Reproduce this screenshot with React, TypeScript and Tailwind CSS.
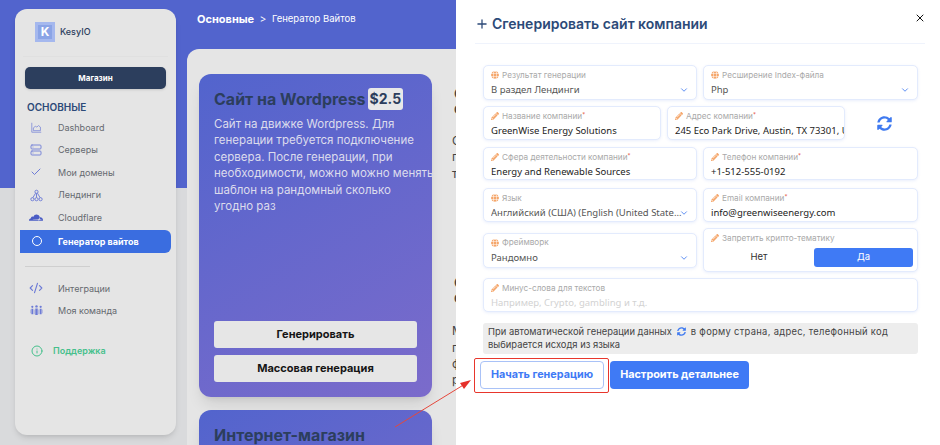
import { ChevronDown, Check, CodeXml, Info, Plus, Server, X } from "lucide-react";
import type { ReactNode } from "react";
import { FaCloudflare, FaGlobe, FaPencilAlt, FaSyncAlt } from "react-icons/fa";

const head = "font-['Inter','Noto_Sans',sans-serif]";
const body = "font-['Noto_Sans','Open_Sans',sans-serif]";

const wordpressLines = [
  "Сайт на движке Wordpress. Для",
  "генерации требуется подключение",
  "сервера. После генерации, при",
  "необходимости, можно можно менять",
  "шаблон на рандомный сколько",
  "угодно раз",
];

function DashIcon() {
  return (
    <svg viewBox="0 0 14 14" className="h-[11px] w-[11px] text-[#7b87d8]" fill="none" stroke="currentColor" strokeWidth="1">
      <path d="M1 1v12h12" />
      <path d="M3 11V7.5l2.5-2 2 1 2-2 2.5 2V11z" />
    </svg>
  );
}

function SitemapIcon() {
  return (
    <svg viewBox="0 0 14 14" className="h-[13px] w-[13px] text-[#6d7bd6]" fill="none" stroke="currentColor" strokeWidth="1">
      <circle cx="7" cy="3" r="1.7" />
      <circle cx="2.6" cy="11" r="1.7" />
      <circle cx="7" cy="11" r="1.7" />
      <circle cx="11.4" cy="11" r="1.7" />
      <path d="M7 4.7v4.6M6 4.5 3 9.5M8 4.5l3 5" />
    </svg>
  );
}

function TeamIcon() {
  return (
    <svg viewBox="0 0 14 14" className="h-[13px] w-[13px] text-[#6d7bd6]" fill="currentColor">
      <circle cx="2.5" cy="3" r="1.2" />
      <circle cx="7" cy="2.6" r="1.3" />
      <circle cx="11.5" cy="3" r="1.2" />
      <path d="M1.5 5h2v6h-2zM5.7 4.8h2.6v7h-2.6zM10.5 5h2v6h-2z" />
      <path d="M.3 6v4M13.7 6v4M4.6 6v5M9.4 6v5" stroke="currentColor" strokeWidth=".5" />
    </svg>
  );
}

function NavItem({ icon, label }: { icon: ReactNode; label: string }) {
  return (
    <div className="flex h-[22.6px] items-center">
      <div className="flex w-[43px] justify-center pr-[3px] pl-[2px]">{icon}</div>
      <span className={`${head} text-[9px] text-[#666a70]`}>{label}</span>
    </div>
  );
}

function Sidebar() {
  return (
    <aside className="mt-[9px] ml-[15px] flex h-[426px] w-[161px] shrink-0 flex-col rounded-xl bg-[#e5e5e5] shadow-md">
      <div className="mx-[8px] flex h-[48px] items-center gap-[5px] border-b border-[#e0e0e0] pb-[2px] pl-[12px]">
        <div className="flex h-[20px] w-[20px] items-center justify-center border-[3px] border-[#a5b8ee] bg-[#8ba4e6]">
          <span className={`${head} text-[12px] leading-none font-bold text-white`}>K</span>
        </div>
        <span className={`${head} text-[9px] font-medium text-[#2c3e5d]`}>KesyIO</span>
      </div>
      <div className={`${head} mx-[10px] mt-[10px] flex h-[22px] items-center justify-center rounded-[5px] bg-[#2c3e5d] text-[8px] font-bold text-white shadow`}>
        Магазин
      </div>
      <div className={`${head} mt-[11px] ml-[12px] text-[10px] leading-[14px] font-semibold text-[#2c4a78]`}>ОСНОВНЫЕ</div>
      <div className="mt-[2px] flex flex-col">
        <NavItem icon={<DashIcon />} label="Dashboard" />
        <NavItem icon={<Server size={12} className="text-[#7b87d8]" />} label="Серверы" />
        <NavItem icon={<Check size={12} className="text-[#6d7bd6]" />} label="Мои домены" />
        <NavItem icon={<SitemapIcon />} label="Лендинги" />
        <NavItem icon={<FaCloudflare size={14} className="text-[#4a5cc5]" />} label="Cloudflare" />
      </div>
      <div className="mt-[1px] mr-[5px] ml-[5px] flex h-[23px] items-center rounded-r-md bg-[#3a6de0]">
        <div className="flex w-[38px] justify-center pr-[5px]">
          <div className="h-[10px] w-[10px] rounded-full border-[1.5px] border-white" />
        </div>
        <span className={`${head} text-[9px] font-bold text-white`}>Генератор вайтов</span>
      </div>
      <div className="mt-[13px] ml-[10px] h-px w-[65px] bg-[#cfcfcf]" />
      <div className="mt-[10px] flex flex-col">
        <NavItem icon={<CodeXml size={14} className="text-[#6d7bd6]" />} label="Интеграции" />
        <NavItem icon={<TeamIcon />} label="Моя команда" />
      </div>
      <div className="mt-[22px] ml-[16px] flex items-center gap-[10px]">
        <Info size={12} className="text-[#45c08c]" />
        <span className={`${head} text-[9px] font-semibold text-[#45c08c]`}>Поддержка</span>
      </div>
    </aside>
  );
}

function Tariff({ title, price, lines, tall }: { title: string; price?: string; lines?: string[]; tall?: boolean }) {
  return (
    <div className={`${tall ? "h-[323px]" : "h-[200px]"} flex shrink-0 flex-col rounded-xl bg-[linear-gradient(150deg,#5264cd,#7b6bcb)] px-[15px] shadow-lg`}>
      <div className={`${head} mt-[14px] flex h-[22px] items-center gap-[2px] text-[16px] font-bold whitespace-nowrap text-[#2c3e5d]`}>
        {title}
        {price && <span className="rounded-[3px] bg-[#e8e8e8] px-[2px] py-px text-[14px] leading-[20px]">{price}</span>}
      </div>
      {lines && (
        <div className={`${head} mt-[6px] text-[11.5px] leading-[16.4px] whitespace-nowrap text-[#dcdcec]`}>
          {lines.map((line) => (
            <div key={line}>{line}</div>
          ))}
        </div>
      )}
      {tall && (
        <div className="mt-auto mb-[15px] flex flex-col gap-[7px]">
          <div className={`${head} flex h-[27px] items-center justify-center rounded-[3px] bg-[#e6e6e6] text-[11px] font-bold text-[#151515]`}>Генерировать</div>
          <div className={`${head} flex h-[27px] items-center justify-center rounded-[3px] bg-[#e6e6e6] text-[11px] font-bold text-[#151515]`}>Массовая генерация</div>
        </div>
      )}
    </div>
  );
}

function MainArea() {
  return (
    <div className="ml-[11px] flex w-[269px] shrink-0 flex-col">
      <div className="flex h-[49px] shrink-0 items-center gap-[6px] pb-[10px] pl-[10px] text-white">
        <span className={`${head} text-[11px] font-bold`}>Основные</span>
        <span className="text-[10px]">&gt;</span>
        <span className={`${head} text-[9.5px]`}>Генератор Вайтов</span>
      </div>
      <div className="flex h-[396px] shrink-0 gap-[12px] overflow-hidden rounded-tl-xl bg-[#e5e5e5] pt-[25px] pl-[12px]">
        <div className="flex w-[233px] shrink-0 flex-col gap-[13px]">
          <Tariff tall title="Сайт на Wordpress" price="$2.5" lines={wordpressLines} />
          <Tariff title="Интернет-магазин" />
        </div>
        <div className={`${head} flex w-[233px] shrink-0 flex-col pl-[8px] text-[12px] leading-[16.4px] text-[#444]`}>
          <div className="mt-[12px] pl-[2px] text-[15px] leading-[15px] font-bold">Сайт<br />с</div>
          <p className="mt-[17px]">Сайт<br />г<br />т</p>
          <div className="mt-[93px] pl-[2px] text-[15px] leading-[15px] font-bold">С<br />с</div>
          <p className="mt-[18px]">М<br />п<br />ф<br />р</p>
        </div>
      </div>
    </div>
  );
}

function Field({ label, value, kind, select, required, className }: {
  label: string;
  value: string;
  kind: "globe" | "pen";
  select?: boolean;
  required?: boolean;
  className: string;
}) {
  return (
    <div className={`${className} relative flex flex-col rounded-[5px] border border-[#e3ebfd] bg-white pt-[3px] pl-[7px] shadow-[0_1px_3px_rgba(80,120,230,0.12)]`}>
      <div className={`${head} flex h-[12px] items-center gap-[3px] text-[8.2px] text-[#a9a9a9]`}>
        {kind === "globe" ? <FaGlobe size={8} className="text-[#f5a66a]" /> : <FaPencilAlt size={8} className="text-[#f5a66a]" />}
        <span>{label}</span>
        {required && <span className="-mt-[4px] -ml-[3px] text-[6px] text-[#e5533d]">*</span>}
      </div>
      <div className={`${body} mt-[2px] overflow-hidden pr-[14px] text-[9.5px] leading-[14px] whitespace-nowrap ${select ? "text-[#555]" : "text-[#222]"}`}>{value}</div>
      {select && <ChevronDown size={10} className="absolute top-[19px] right-[7px] text-[#3f7af0]" />}
    </div>
  );
}

function Panel() {
  return (
    <section className="ml-auto flex h-[445px] w-[484px] shrink-0 flex-col bg-white">
      <div className="relative mr-[15px] ml-[19px] flex h-[44px] items-center gap-[3px] border-b border-[#eff3fc] pt-[4px]">
        <Plus size={14} strokeWidth={2.2} className="text-[#2c4a78]" />
        <h2 className={`${head} text-[14px] font-semibold text-[#2c4a78]`}>Сгенерировать сайт компании</h2>
        <X size={12} strokeWidth={2} className="absolute top-[12px] right-[-1px] text-[#111]" />
      </div>
      <div className="mt-[21px] ml-[27px] flex w-[435px] flex-col">
        <div className="flex gap-[6px]">
          <Field className="h-[35px] w-[214px]" kind="globe" select label="Результат генерации" value="В раздел Лендинги" />
          <Field className="h-[35px] w-[215px]" kind="globe" select label="Ресширение Index-файла" value="Php" />
        </div>
        <div className="mt-[6px] flex items-center gap-[6px]">
          <Field className="h-[34px] w-[178px]" kind="pen" required label="Название компании" value="GreenWise Energy Solutions" />
          <Field className="h-[34px] w-[178px]" kind="pen" required label="Адрес компании" value="245 Eco Park Drive, Austin, TX 73301, USA" />
          <FaSyncAlt size={15} className="ml-[26px] text-[#3f7af0]" />
        </div>
        <div className="mt-[7px] flex gap-[6px]">
          <Field className="h-[33px] w-[214px]" kind="pen" required label="Сфера деятельности компании" value="Energy and Renewable Sources" />
          <Field className="h-[33px] w-[215px]" kind="pen" required label="Телефон компании" value="+1-512-555-0192" />
        </div>
        <div className="mt-[8px] flex gap-[6px]">
          <Field className="h-[34px] w-[214px]" kind="globe" select label="Язык" value="Английский (США) (English (United State..." />
          <Field className="h-[34px] w-[215px]" kind="pen" required label="Email компании" value="info@greenwiseenergy.com" />
        </div>
        <div className="mt-[6px] flex items-center gap-[6px]">
          <Field className="h-[35px] w-[214px]" kind="globe" select label="Фреймворк" value="Рандомно" />
          <div className="flex h-[44px] w-[215px] flex-col rounded-[5px] border border-[#e3ebfd] bg-white pt-[3px] pl-[7px] shadow-[0_1px_3px_rgba(80,120,230,0.12)]">
            <div className={`${head} flex h-[12px] items-center gap-[3px] text-[8.2px] text-[#a9a9a9]`}>
              <FaPencilAlt size={8} className="text-[#f5a66a]" />
              <span>Запретить крипто-тематику</span>
            </div>
            <div className={`${head} mt-[4px] flex h-[19px] text-[9.5px]`}>
              <div className="flex w-[96px] items-center justify-center text-[#333]">Нет</div>
              <div className="ml-[7px] flex w-[99px] items-center justify-center rounded-[3px] bg-[#3f7af5] text-white">Да</div>
            </div>
          </div>
        </div>
        <div className="mt-[6px] flex h-[34px] flex-col rounded-[5px] border border-[#e3ebfd] bg-white pt-[3px] pl-[7px] shadow-[0_1px_3px_rgba(80,120,230,0.12)]">
          <div className={`${head} flex h-[12px] items-center gap-[3px] text-[8.2px] text-[#a9a9a9]`}>
            <FaPencilAlt size={8} className="text-[#f5a66a]" />
            <span>Минус-слова для текстов</span>
          </div>
          <div className={`${body} mt-[2px] text-[9.5px] leading-[14px] text-[#d2d2d2]`}>Например, Crypto, gambling и т.д.</div>
        </div>
        <div className={`${head} mt-[11px] h-[31px] rounded-[3px] bg-[#ededed] pt-[2px] pl-[5px] text-[9.4px] leading-[13px] text-[#444]`}>
          <div className="flex items-center">
            При автоматической генерации данных
            <FaSyncAlt size={9} className="mx-[5px] text-[#3f7af0]" />
            <span className="tracking-[0.3px]">в форму страна, адрес, телефонный код</span>
          </div>
          <div>выбирается исходя из языка</div>
        </div>
      </div>
      <div className={`${head} mt-[7px] ml-[24px] flex gap-[6px] text-[10.8px] font-bold`}>
        <div className="flex h-[28px] w-[124px] items-center justify-center rounded-[4px] border border-[#a9c2f7] bg-white text-[#3f7af5]">Начать генерацию</div>
        <div className="flex h-[28px] w-[139px] items-center justify-center rounded-[4px] bg-[#3f7af5] text-white">Настроить детальнее</div>
      </div>
    </section>
  );
}

export default function App() {
  return (
    <div className="relative flex h-[445px] w-[940px] overflow-hidden bg-[linear-gradient(#5264cd_188px,#d9dadc_188px)]">
      <Sidebar />
      <MainArea />
      <Panel />
      {/* annotation over the screenshot: red frame and arrow */}
      <div className="absolute top-[358px] left-[474px] h-[35px] w-[135px] rounded-[2px] border-[1.5px] border-[#e8362c]" />
      <svg className="absolute top-[370px] left-[385px] h-[65px] w-[95px]" viewBox="0 0 95 65" fill="none">
        <path d="M10 57 L80 14" stroke="#e5483c" strokeWidth="1" />
        <path d="M86 10 L75 13 L79 19 Z" fill="#e5302a" />
      </svg>
    </div>
  );
}
